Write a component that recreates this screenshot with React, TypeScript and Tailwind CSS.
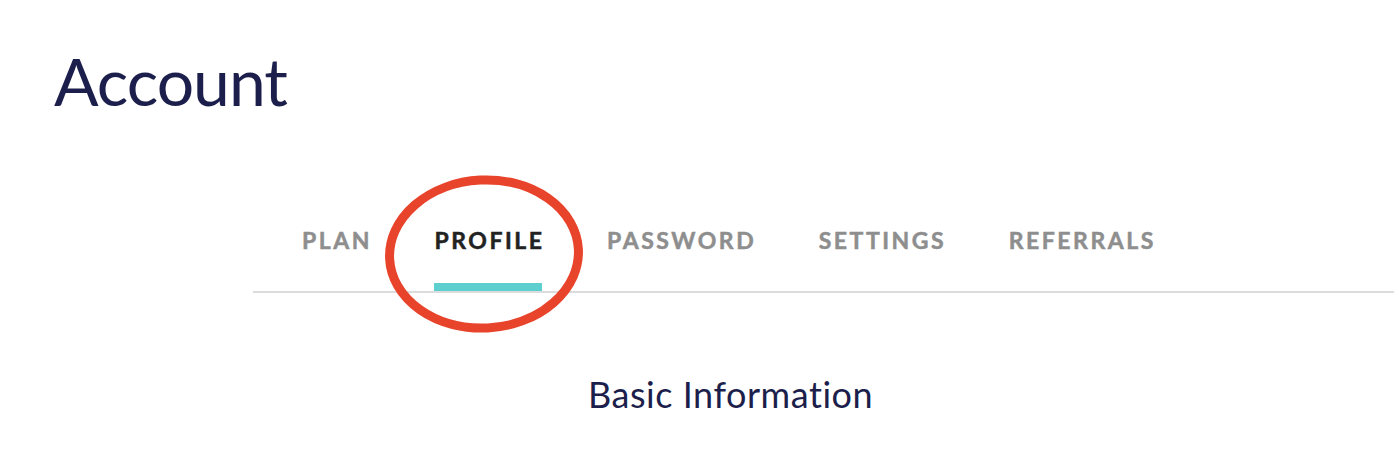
import React from "react";

const tabs = ["PLAN", "PROFILE", "PASSWORD", "SETTINGS", "REFERRALS"];

export default function App() {
  const active = "PROFILE";

  return (
    <div
      className="relative h-[454px] w-[1394px] overflow-hidden bg-white"
      style={{ fontFamily: "Lato, 'Open Sans', sans-serif" }}
    >
      <h1 className="pl-[54px] pt-[48px] text-[66px] font-normal leading-none tracking-[-0.015em] text-[#1c1e4b]">
        Account
      </h1>

      <div className="ml-[253px] mt-[115px] border-b-2 border-[#dcdcdc] pl-[49px]">
        <div className="flex gap-[65px]">
          {tabs.map((t) => (
            <div key={t} className="flex flex-col">
              <span
                className={
                  "-mr-[0.11em] text-[23px] font-bold leading-none tracking-[0.11em] [-webkit-text-stroke-width:0.5px] " +
                  (t === active ? "text-[#222222]" : "text-[#8e8e8e]")
                }
              >
                {t}
              </span>
              <div
                className={
                  "mt-[31px] h-[8px] " + (t === active ? "bg-[#5ecfcf]" : "bg-transparent")
                }
              />
            </div>
          ))}
        </div>
      </div>

      <div className="pl-[588px] pt-[83px]">
        <h2 className="text-[36px] font-normal leading-none tracking-[0.015em] text-[#1c1e4b]">
          Basic Information
        </h2>
      </div>

      {/* annotation circle */}
      <svg
        className="pointer-events-none absolute left-[380px] top-[170px]"
        width="210"
        height="170"
        viewBox="0 0 210 170"
      >
        <ellipse
          cx="104"
          cy="84"
          rx="94.5"
          ry="74"
          fill="none"
          stroke="#e8432b"
          strokeWidth="9"
          transform="rotate(-3 104 84)"
        />
      </svg>
    </div>
  );
}
